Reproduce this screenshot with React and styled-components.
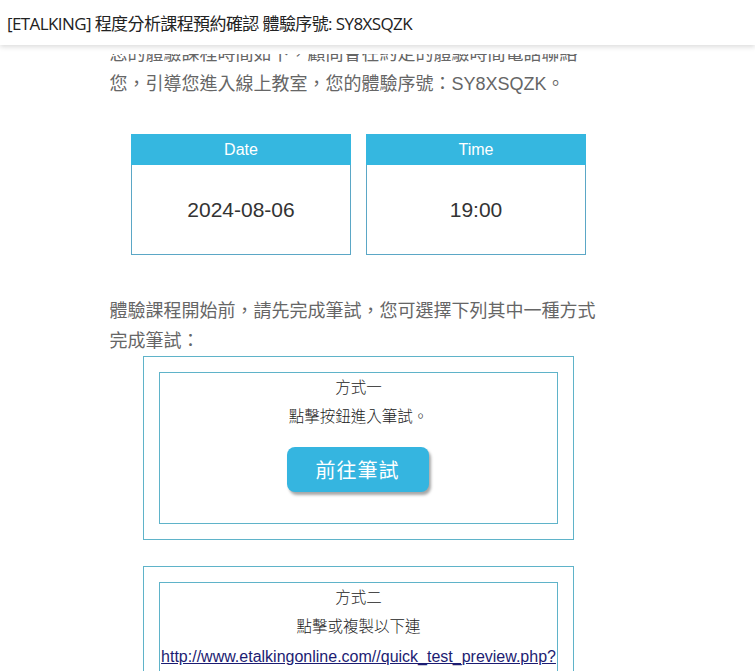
import React, { useRef, useLayoutEffect } from 'react'
import styled, { createGlobalStyle } from 'styled-components'

const GlobalStyle = createGlobalStyle`
    html, body {
        margin: 0;
        padding: 0;
        background: #ffffff;
    }

    body {
        font-family: "Liberation Sans", "Noto Sans CJK TC", sans-serif;
    }
`

const Frame = styled.div`
    height: 100vh;

    display: flex;
    flex-direction: column;
`

const TopBar = styled.header`
    position: relative;
    z-index: 2;

    flex: 0 0 45px;
    padding: 0 7px;

    display: flex;
    align-items: center;

    background: #ffffff;
    box-shadow: 0 2px 5px rgba(0, 0, 0, 0.14);

    font-family: "Open Sans", "Noto Sans CJK TC", sans-serif;
    font-size: 17px;
    color: #222222;
    letter-spacing: -0.6px;
`

const Viewport = styled.div`
    flex: 1;
    margin-top: 9px;

    overflow: hidden;
`

const Column = styled.main`
    width: 498px;
    margin: 0 auto;
    padding: 0 38px 60px 0;
`

const Paragraph = styled.p`
    margin: 0;

    font-size: 18px;
    line-height: 30px;
    color: #666666;
`

const Cards = styled.div`
    display: flex;
    justify-content: center;
    gap: 15px;

    margin: 35px 0 41px;
`

const Card = styled.div`
    width: 220px;
    height: 121px;

    display: flex;
    flex-direction: column;

    border: 1px solid #5ba7c6;
    box-sizing: border-box;
`

const CardHead = styled.div`
    height: 30px;
    margin: -1px -1px 0;
    padding-top: 1px;

    display: flex;
    align-items: center;
    justify-content: center;

    background: #35b7e0;
    color: #ffffff;
    font-size: 16px;
`

const CardValue = styled.div`
    flex: 1;
    padding-top: 1px;

    display: flex;
    align-items: center;
    justify-content: center;

    font-size: 21px;
    color: #333333;
`

const Method = styled.section`
    width: 431px;
    margin: ${props => props.$top}px auto 0;
    padding: 15px;

    border: 1px solid #5fb3c9;
    box-sizing: border-box;
`

const MethodInner = styled.div`
    min-height: 152px;
    padding: 0 2px;

    display: flex;
    flex-direction: column;
    align-items: center;

    border: 1px solid #5fb3c9;
    box-sizing: border-box;

    font-size: 15.5px;
    font-weight: 300;
    color: #222222;
`

const Line = styled.div`
    line-height: ${props => props.$height || 30}px;
    text-align: center;
`

const Button = styled.a`
    width: 142px;
    height: 45px;
    margin: 15px 2px 0 0;

    display: flex;
    align-items: center;
    justify-content: center;

    border-radius: 8px;
    background: #35b5e0;
    box-shadow: 2px 3px 3px rgba(0, 0, 0, 0.35);

    font-size: 20px;
    font-weight: 400;
    color: #ffffff;
    text-decoration: none;
    letter-spacing: 1px;
`

const LinkText = styled.a`
    font-size: 16px;
    font-weight: 400;
    line-height: 30px;
    color: #1c1c72;
    text-decoration: underline;
    white-space: nowrap;
`

const App = () => {

    // Refs
    const viewportRef = useRef(null)

    useLayoutEffect(() => {
        viewportRef.current.scrollTop = 15
    }, [])

    return (
        <Frame>
            <GlobalStyle />
            <TopBar>[ETALKING] 程度分析課程預約確認 體驗序號: SY8XSQZK</TopBar>
            <Viewport ref={viewportRef}>
                <Column>
                    <Paragraph>
                        您的體驗課程時間如下，顧問會在約定的體驗時間電話聯絡您，引導您進入線上教室，您的體驗序號：SY8XSQZK。
                    </Paragraph>
                    <Cards>
                        <Card>
                            <CardHead>Date</CardHead>
                            <CardValue>2024-08-06</CardValue>
                        </Card>
                        <Card>
                            <CardHead>Time</CardHead>
                            <CardValue>19:00</CardValue>
                        </Card>
                    </Cards>
                    <Paragraph>
                        體驗課程開始前，請先完成筆試，您可選擇下列其中一種方式完成筆試：
                    </Paragraph>
                    <Method $top={0}>
                        <MethodInner>
                            <Line $height={29}>方式一</Line>
                            <Line>點擊按鈕進入筆試。</Line>
                            <Button href="#">前往筆試</Button>
                        </MethodInner>
                    </Method>
                    <Method $top={26}>
                        <MethodInner>
                            <Line $height={29}>方式二</Line>
                            <Line>點擊或複製以下連</Line>
                            <LinkText href="#">http://www.etalkingonline.com//quick_test_preview.php?</LinkText>
                        </MethodInner>
                    </Method>
                </Column>
            </Viewport>
        </Frame>
    )
}

export default App
